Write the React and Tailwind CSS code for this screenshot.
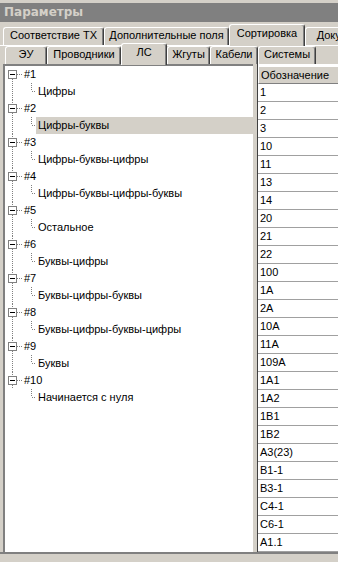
import React from 'react';

const groups = [
  ['#1', 'Цифры'],
  ['#2', 'Цифры-буквы'],
  ['#3', 'Цифры-буквы-цифры'],
  ['#4', 'Цифры-буквы-цифры-буквы'],
  ['#5', 'Остальное'],
  ['#6', 'Буквы-цифры'],
  ['#7', 'Буквы-цифры-буквы'],
  ['#8', 'Буквы-цифры-буквы-цифры'],
  ['#9', 'Буквы'],
  ['#10', 'Начинается с нуля'],
];

const rows = [
  '1', '2', '3', '10', '11', '13', '14', '20', '21', '22', '100', '1A', '2A',
  '10A', '11A', '109A', '1A1', '1A2', '1B1', '1B2', 'A3(23)', 'B1-1', 'B3-1',
  'C4-1', 'C6-1', 'A1.1',
];

const Tab = ({ label, w, active }) =>
  active ? (
    <div
      className={`${w} flex-none h-[22px] -mb-px relative z-10 bg-[#d4d0c8] border-t border-l border-white border-r border-r-[#404040] shadow-[inset_-1px_0_0_#808080] rounded-t-[3px] flex justify-center pt-[2px] whitespace-nowrap overflow-hidden`}
    >
      {label}
    </div>
  ) : (
    <div
      className={`${w} flex-none h-[18px] bg-[#d4d0c8] border-t border-l border-white border-r border-r-[#404040] shadow-[inset_-1px_0_0_#808080] rounded-t-[3px] flex justify-center pt-[1px] whitespace-nowrap overflow-hidden`}
    >
      {label}
    </div>
  );

// dotted tree lines, drawn per row
const RootLines = ({ first, last }) => (
  <svg width="18" height="17" className="flex-none" shapeRendering="crispEdges">
    {!first && <line x1="7.5" y1="0" x2="7.5" y2="4" stroke="#808080" strokeDasharray="1 1" />}
    {!last && <line x1="7.5" y1="13" x2="7.5" y2="17" stroke="#808080" strokeDasharray="1 1" />}
    <rect x="3.5" y="4.5" width="8" height="8" fill="#fff" stroke="#808080" />
    <line x1="5" y1="8.5" x2="10" y2="8.5" stroke="#000" />
    <line x1="12" y1="8.5" x2="17" y2="8.5" stroke="#808080" strokeDasharray="1 1" />
  </svg>
);

const ChildLines = ({ last }) => (
  <svg width="31" height="17" className="flex-none" shapeRendering="crispEdges">
    {!last && <line x1="7.5" y1="0" x2="7.5" y2="17" stroke="#808080" strokeDasharray="1 1" />}
    <line x1="26.5" y1="0" x2="26.5" y2="8" stroke="#808080" strokeDasharray="1 1" />
    <line x1="27" y1="8.5" x2="31" y2="8.5" stroke="#808080" strokeDasharray="1 1" />
  </svg>
);

export default function App() {
  return (
    <div className="w-[338px] h-[562px] overflow-hidden bg-[#d4d0c8] font-['Liberation_Sans',Arial,sans-serif] text-[11px] leading-[13px] text-black flex flex-col">
      {/* Title */}
      <div className="mt-[3px] h-[19px] flex-none bg-[#808080] flex items-center pl-[4px] font-['DejaVu_Sans',sans-serif] font-bold text-[12px] text-[#d4d0c8]">
        Параметры
      </div>

      {/* Outer tabs */}
      <div className="h-[23px] flex-none flex items-end pl-[3px]">
        <Tab label="Соответствие ТХ" w="w-[101px]" />
        <Tab label="Дополнительные поля" w="w-[125px]" />
        <Tab label="Сортировка" w="w-[76px]" active />
        <Tab label="Документы" w="w-[80px]" />
      </div>

      <div className="flex-1 flex flex-col border-t border-white min-h-0">
        {/* Inner tabs */}
        <div className="h-[18px] flex-none flex items-end pl-[5px]">
          <Tab label="ЭУ" w="w-[42px]" />
          <Tab label="Проводники" w="w-[74px]" />
          <Tab label="ЛС" w="w-[46px]" active />
          <Tab label="Жгуты" w="w-[43px]" />
          <Tab label="Кабели" w="w-[48px]" />
          <Tab label="Системы" w="w-[58px]" />
        </div>

        {/* Content */}
        <div className="h-[488px] flex-none flex pl-[3px]">
          {/* Tree */}
          <div className="w-[250px] flex-none bg-white border-l-2 border-t-2 border-[#808080]">
            {groups.map(([name, child], i) => (
              <React.Fragment key={name}>
                <div className="h-[17px] flex items-center">
                  <RootLines first={i === 0} last={false} />
                  <span className="pl-[1px]">{name}</span>
                </div>
                <div className="h-[17px] flex items-center">
                  <ChildLines last={i === groups.length - 1} />
                  <span
                    className={
                      i === 1
                        ? 'flex-1 h-[17px] bg-[#d4d0c8] pl-[2px] flex items-center'
                        : 'pl-[2px]'
                    }
                  >
                    {child}
                  </span>
                </div>
              </React.Fragment>
            ))}
          </div>

          {/* Splitter */}
          <div className="w-[4px] flex-none bg-[#d4d0c8]" />

          {/* Grid */}
          <div className="flex-1 flex flex-col border-l border-[#404040] pt-[2px] bg-white">
            <div className="h-[18px] flex-none bg-[#d4d0c8] border-t border-l border-white border-b border-b-[#808080] flex items-center pl-[2px]">
              Обозначение
            </div>
            {rows.map((r) => (
              <div key={r} className="h-[18px] flex-none border-b border-[#a0a0a0] flex items-center pl-[2px]">
                {r}
              </div>
            ))}
          </div>
        </div>

        <div className="h-[2px] flex-none bg-[#808080]" />
      </div>
    </div>
  );
}
